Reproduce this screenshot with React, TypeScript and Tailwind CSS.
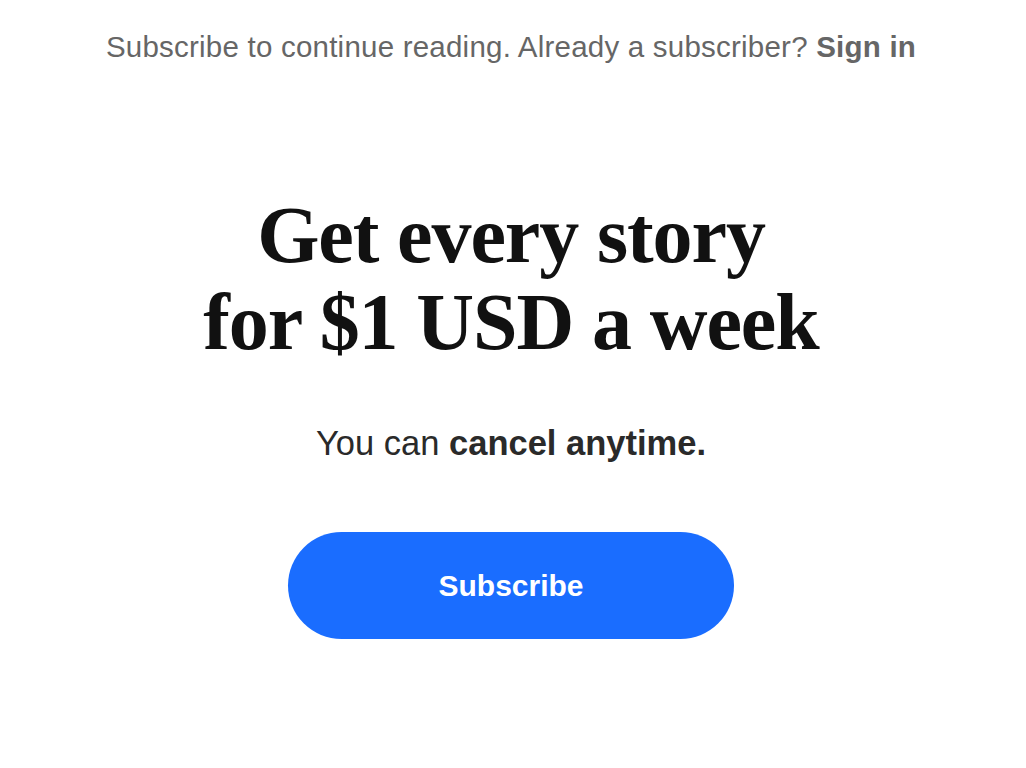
export default function App() {
  return (
    <div className="min-h-[768px] bg-white flex flex-col items-center pr-[4px]">
      <p className="mt-[30px] text-[29.5px] leading-[34px] text-[#666666] font-['Liberation_Sans',sans-serif] tracking-[0.22px]">
        Subscribe to continue reading. Already a subscriber?{" "}
        <span className="font-bold">Sign in</span>
      </p>
      <h1 className="mt-[128px] text-center text-[80px] leading-[87px] font-bold text-[#111111] font-['Liberation_Serif',serif] tracking-[-1.1px]">
        Get every story
        <br />
        for $1 USD a week
      </h1>
      <p className="mt-[57px] text-[34.5px] leading-[40px] text-[#2a2a2a] font-['Liberation_Sans',sans-serif]">
        You can <span className="font-bold">cancel anytime.</span>
      </p>
      <button className="mt-[69px] w-[446px] h-[107px] rounded-full bg-[#1a6dff] text-white text-[30px] font-bold font-['Liberation_Sans',sans-serif]">
        Subscribe
      </button>
    </div>
  );
}
